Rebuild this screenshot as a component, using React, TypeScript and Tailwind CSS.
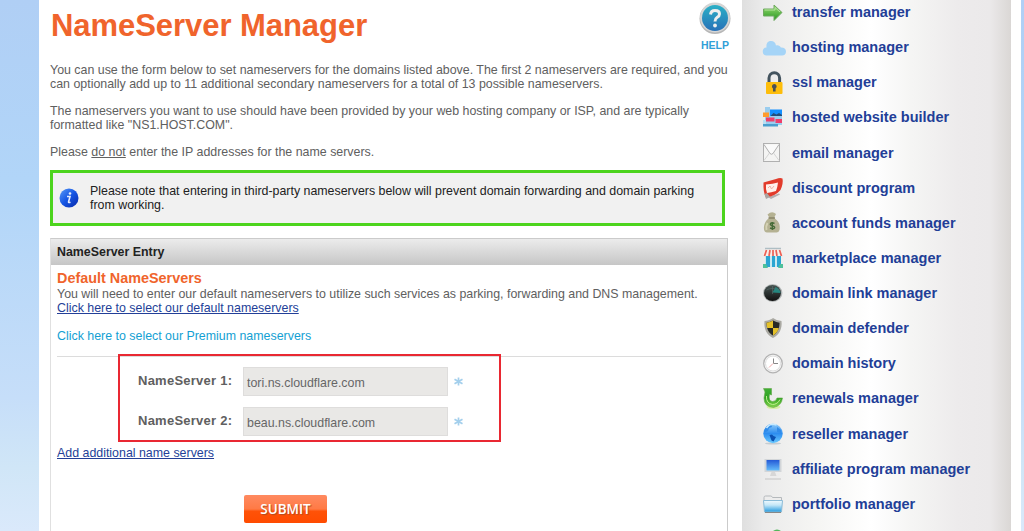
import type { ReactNode } from "react";

function Icon({ children }: { children: ReactNode }) {
  return (
    <svg width="24" height="24" viewBox="0 0 24 24" className="block shrink-0 overflow-visible">
      {children}
    </svg>
  );
}

const items: { label: string; icon: ReactNode }[] = [
  {
    label: "transfer manager",
    icon: (
      <>
        <path d="M.5 9h10.500V5l8 7.500-8 8v-4.500H.5z" fill="url(#green)" stroke="#6fa860" />
        <path d="M1.500 10h10.500V7.500l5 4.500" fill="none" stroke="#b5e59c" />
      </>
    ),
  },
  {
    label: "hosting manager",
    icon: <path d="M4 20.500a4 4 0 0 1-.5-8C3 8.500 4.500 6 8 6c3 0 4.500 1.500 5 4.500 2-.8 4 .2 4.800 2 3-.2 5.200 1.300 5.200 4 0 2.600-1.500 4-4 4z" fill="#a5d4f7" />,
  },
  {
    label: "ssl manager",
    icon: (
      <>
        <path d="M6 13V8a5.300 5.300 0 0 1 10.600 0V13" fill="none" stroke="#44545f" strokeWidth="3" />
        <rect x="3" y="12" width="16.500" height="12" rx="1" fill="#fdbd0b" />
        <path d="M11.300 14a2.400 2.400 0 0 1 1.300 4.400V21.500H10V18.400A2.400 2.400 0 0 1 11.300 14" fill="#4a5055" />
      </>
    ),
  },
  {
    label: "hosted website builder",
    icon: (
      <>
        <path d="M2 2h5v3h12v15H2z" fill="#9bcdee" />
        <path d="M0 19h15v2.500H0z" fill="#4a9fcf" />
        <path d="M0 15h3v4H0z" fill="#b9dff3" />
        <path d="M7 4.500h12v6.500H7z" fill="#138fff" />
        <path d="m7.500 11 3-3 3 1.500 2.500-1.500 3 2v1z" fill="#244c77" />
        <path d="M0 7.500h6v4.500H0z" fill="#ff9b2d" />
        <path d="M3 12.500h8.500v4H3zM12.500 14h6.500v4h-6.500z" fill="#ee3f6b" />
      </>
    ),
  },
  {
    label: "email manager",
    icon: (
      <>
        <rect x=".5" y="2.500" width="16" height="18" fill="#f4f4f3" stroke="#b0b0b0" />
        <path d="m1 3.500 6 9q1.500 1.500 3 0l6-9" fill="#fafafa" stroke="#b0b0b0" />
        <path d="m1 19.500 5.500-7.500M16 19.500 10.500 12" fill="none" stroke="#d5d5d5" />
      </>
    ),
  },
  {
    label: "discount program",
    icon: (
      <>
        <path d="M5 21 16 17.500l1 1L8 23z" fill="#b5aeb0" />
        <path d="M.5 6.500 13 3q4-1.500 6.500-.5 1 5-2 11.500-5 6-14.500 7.500-3-5-2.500-15" fill="#e23b2b" />
        <path d="M3 8.500q7-.5 12-2-.5 5-2 8.500-5 1.500-9 2-1.500-3-1-8.500" fill="#fff0eb" />
        <path d="m1.500 18 2.500-1 3 4-4 2z" fill="#a9a4a2" />
        <path d="m5 12 2-2 1.500 3 2.500-3" fill="none" stroke="#eeb3a8" />
      </>
    ),
  },
  {
    label: "account funds manager",
    icon: (
      <>
        <path d="M4.500 3.500Q9-.5 13 3l-2 4c5 3 6.500 7 5.500 12q-.8 2.500-3 2.500H4q-2.500 0-3-3C.5 13 3 9 6.500 7z" fill="#b5b293" />
        <path d="M5.500 7H12" stroke="#8a8467" strokeWidth="1.500" />
        <path d="M4.500 12q-2 3.500-1 7" fill="none" stroke="#d5d2b4" strokeWidth="2" />
        <path d="M11.500 12.500c-4-2-6 1.500-2 2.500s2 4-2.500 2M9.300 11v8" fill="none" stroke="#456b37" strokeWidth="1.400" />
      </>
    ),
  },
  {
    label: "marketplace manager",
    icon: (
      <>
        <path d="M2 8h16v13H2z" fill="#c9e9f1" />
        <path d="M3 9h4v12H3zM9 9h3v12H9zM14 9h4v12h-4z" fill="#2aa5d2" />
        <path d="M3 2h14l3 6-1 2H1L0 8z" fill="#f8eeea" />
        <path d="M3.500 4 1.500 10M7 4 6 10M10 4v6M13 4l1 6M16.500 4l2 6" stroke="#ec6055" strokeWidth="1.700" />
        <path d="M2 2.500h16" stroke="#aebec4" strokeWidth="1.500" />
        <path d="M0 22v-4h3l2 4zM20 22v-4h-3l-2 4z" fill="#4fc09a" />
      </>
    ),
  },
  {
    label: "domain link manager",
    icon: (
      <>
        <ellipse cx="9.700" cy="12" rx="9.700" ry="9" fill="#b4b8b8" />
        <ellipse cx="9.500" cy="12" rx="8.500" ry="8" fill="url(#dark)" />
        <path d="m9.500 11.500 3-5.500q4.500 1.500 5 6z" fill="#25867f" />
        <path d="M3.500 9q5-3 13 0M9.500 5v8" fill="none" stroke="#57706e" strokeWidth=".6" />
      </>
    ),
  },
  {
    label: "domain defender",
    icon: (
      <>
        <path d="M10 2q4 3 8.500 3c1 8-2.500 14-8.500 17C4 19 .5 13 1.500 5 6 5 10 2 10 2" fill="#aaa9a2" />
        <path d="M10 4.500q3.500 2 6.500 2.300c0 6-2 10-6.500 12.700C5.500 17 3.500 13 3.500 6.800Q6.500 6.500 10 4.500" fill="#282a24" />
        <path d="M10 4.500V12H4.200Q3.500 9.500 3.500 6.800 7 6.500 10 4.500M10 12h5.800q-1.300 5-5.800 7.500z" fill="#e5c129" />
      </>
    ),
  },
  {
    label: "domain history",
    icon: (
      <>
        <circle cx="10" cy="12.500" r="9.300" fill="#fafafa" stroke="#b3b3b3" strokeWidth="1.300" />
        <circle cx="10" cy="12.500" r="7.500" fill="#fff" stroke="#ddd" />
        <path d="M10.500 7.500v5H15" fill="none" stroke="#888" />
        <path d="m10 12.500-4 4" stroke="#f2a8a8" />
      </>
    ),
  },
  {
    label: "renewals manager",
    icon: (
      <>
        <ellipse cx="10.500" cy="21" rx="7" ry="2" fill="#d9efaa" />
        <path d="M.5 2.500h8V9L6.500 8.200Q5 15 9.500 15.500q3.500 0 4.500-3.500h5.500Q18.500 20 10.500 21.500 1 21 1 12l1-6z" fill="url(#renew)" stroke="#62a648" strokeWidth=".6" />
        <path d="M3.500 10q-.5 7.500 6 8.500 5 0 7.500-5" fill="none" stroke="#c0f190" />
      </>
    ),
  },
  {
    label: "reseller manager",
    icon: (
      <>
        <ellipse cx="10" cy="21.500" rx="8" ry="1" fill="#c6ccd1" />
        <circle cx="10" cy="11.500" r="9.700" fill="url(#globe)" />
        <path d="M1 9q2-6 7-7l1 3-3 1-1 3-4 2zM14 5l4 3v3l-4-1z" fill="#308be9" />
        <path d="m6.500 13 2.500-.5 1.500 1.500 2.500 1-2.500 4.500-2-1z" fill="#0b51b2" />
        <path d="M3.500 6q4-5.500 10-3" fill="none" stroke="#c7eaff" strokeWidth="1.500" />
      </>
    ),
  },
  {
    label: "affiliate program manager",
    icon: (
      <>
        <rect x="1.500" y="2" width="17" height="13" fill="#d2d5d8" />
        <rect x="3.500" y="3" width="13" height="10.500" fill="url(#screen)" />
        <ellipse cx="10" cy="19" rx="5.500" ry="3" fill="#ededed" />
        <path d="M8.500 15h3.500l1.500 4H7z" fill="#d7d7d7" />
        <path d="M2 22h16" stroke="#c4c4c4" />
      </>
    ),
  },
  {
    label: "portfolio manager",
    icon: (
      <>
        <path d="M1 8V5.500Q1 4 2.500 4h5Q9 4 9.500 5.500H18.500V10H1z" fill="#ededed" stroke="#b5b9bc" />
        <path d="M.5 8.500h19L18.500 20h-17z" fill="url(#folder)" stroke="#8abbd7" />
        <path d="M2 20.500h16" stroke="#888" />
      </>
    ),
  },
];

function Gradients() {
  return (
    <svg width="0" height="0" className="absolute">
      <defs>
        <linearGradient id="green" x2="0" y2="1">
          <stop stopColor="#9bdd75" />
          <stop offset="1" stopColor="#25961e" />
        </linearGradient>
        <linearGradient id="renew" x2="0" y2="1">
          <stop stopColor="#3faf35" />
          <stop offset=".5" stopColor="#2ea321" />
          <stop offset="1" stopColor="#86d54c" />
        </linearGradient>
        <linearGradient id="dark" x2="0" y2="1">
          <stop stopColor="#475452" />
          <stop offset="1" stopColor="#111" />
        </linearGradient>
        <linearGradient id="globe" x2="0" y2="1">
          <stop stopColor="#8fcbf8" />
          <stop offset=".5" stopColor="#2d8df0" />
          <stop offset="1" stopColor="#6bcaff" />
        </linearGradient>
        <linearGradient id="screen" x2="0" y2="1">
          <stop stopColor="#2459d6" />
          <stop offset="1" stopColor="#65bdfb" />
        </linearGradient>
        <linearGradient id="folder" x2="0" y2="1">
          <stop stopColor="#eef9fe" />
          <stop offset=".4" stopColor="#c4e7f8" />
          <stop offset="1" stopColor="#2299de" />
        </linearGradient>
        <linearGradient id="help" x2="0" y2="1">
          <stop stopColor="#2bb0c6" />
          <stop offset="1" stopColor="#2871b8" />
        </linearGradient>
        <linearGradient id="info" x2="1" y2="1">
          <stop stopColor="#5a9cf7" />
          <stop offset=".5" stopColor="#1454e3" />
          <stop offset="1" stopColor="#0828a8" />
        </linearGradient>
      </defs>
    </svg>
  );
}

function NameField({ n, value }: { n: number; value: string }) {
  return (
    <div className="flex h-[29px]">
      <label className="w-[94px] pt-[6px] text-[13px] leading-[16px] font-bold tracking-[0.25px] whitespace-nowrap text-[#606060]">
        NameServer {n}:
      </label>
      <input
        readOnly
        value={value}
        className="ml-[11px] h-[29px] w-[205px] border border-[#dedddc] bg-[#e9e8e6] px-[3px] pt-[2px] text-[12.4px] text-[#666]"
      />
      <svg width="9" height="9" viewBox="0 0 9 9" className="mt-[10px] ml-[6px]">
        <path d="M4.500 .5v8M.5 2.200l8 4.600M8.500 2.200l-8 4.600" stroke="#a3cfec" strokeWidth="1.700" />
      </svg>
    </div>
  );
}

export default function App() {
  return (
    <div
      className="flex h-[531px] w-[1024px] overflow-hidden bg-[linear-gradient(to_bottom,#b0cff5_0%,#b1d5f8_34%,#c6def9_75%,#d0e6f7_88%,#dae9fb_100%)] text-[12.4px] leading-[14px] text-[#606060]"
      style={{ fontFamily: '"Liberation Sans", Arial, sans-serif' }}
    >
      <Gradients />
      <div className="ml-[39px] flex w-[982px] shrink-0 bg-white">
        <main className="flex w-[703px] shrink-0 flex-col pl-[11px]">
          <header className="flex h-[63px] shrink-0 justify-between pr-[11px]">
            <h1 className="pt-[7px] pl-px text-[31px] leading-[38px] font-bold tracking-[-0.05px] whitespace-nowrap text-[#f0642c]">
              NameServer Manager
            </h1>
            <div className="flex w-8 flex-col items-center pt-[2px]">
              <svg width="32" height="32" viewBox="0 0 32 32">
                <circle cx="16" cy="16.500" r="15.500" fill="#b7b7b7" />
                <circle cx="16" cy="15.500" r="15" fill="#d5d5d5" />
                <circle cx="16" cy="16" r="13" fill="url(#help)" />
                <path d="M11.500 12.500q.5-4 4.500-4 4.500 0 4.500 3.500 0 2-2.500 3.500-2 1.200-2 4" fill="none" stroke="#eee" strokeWidth="3" />
                <circle cx="16" cy="23.500" r="1.900" fill="#eee" />
              </svg>
              <span className="mt-[4px] text-[10.5px] font-bold text-[#32a0d8]">HELP</span>
            </div>
          </header>

          <div className="flex flex-col gap-[13px] whitespace-nowrap">
            <p>
              You can use the form below to set nameservers for the domains listed above. The first 2 nameservers are required, and you
              <br />
              can optionally add up to 11 additional secondary nameservers for a total of 13 possible nameservers.
            </p>
            <p>
              The nameservers you want to use should have been provided by your web hosting company or ISP, and are typically
              <br />
              formatted like "NS1.HOST.COM".
            </p>
            <p>
              Please <span className="underline">do not</span> enter the IP addresses for the name servers.
            </p>
          </div>

          <div className="mt-[11px] flex h-[56px] w-[675px] shrink-0 border-[3px] border-[#4cd41d] bg-[#f1f1f1] pt-[11px] pl-[6px] whitespace-nowrap text-[#222]">
            <svg width="20" height="20" viewBox="0 0 20 20" className="mt-[4px] mr-[11px]">
              <circle cx="10" cy="10" r="9.500" fill="url(#info)" />
              <path d="M8 8.500h3L9.500 14q0 1 2 .2" fill="none" stroke="#e5edff" strokeWidth="1.600" />
              <circle cx="11" cy="5.500" r="1.300" fill="#e5edff" />
            </svg>
            <p>
              Please note that entering in third-party nameservers below will prevent domain forwarding and domain parking
              <br />
              from working.
            </p>
          </div>

          <section className="mt-[12px] h-[320px] w-[678px] shrink-0 border border-[#cbcbcb] border-l-[#e0e0e0] whitespace-nowrap">
            <h2 className="h-[26px] bg-gradient-to-b from-[#ececec] to-[#c6c6c6] pl-[6px] text-[12.4px] leading-[27px] font-bold text-[#222]">
              NameServer Entry
            </h2>
            <div className="px-[6px] pt-[5px]">
              <h3 className="text-[14.4px] leading-[17px] font-bold text-[#f0642c]">Default NameServers</h3>
              <p>You will need to enter our default nameservers to utilize such services as parking, forwarding and DNS management.</p>
              <a className="block text-[#233f98] underline">Click here to select our default nameservers</a>
              <a className="mt-[14px] block text-[#139fd3]">Click here to select our Premium nameservers</a>
            </div>
            <div className="relative mx-[6px] mt-[13px] border-t border-[#dcdcdc] pt-[10px]">
              <div className="flex flex-col gap-[11px] pl-[81px]">
                <NameField n={1} value="tori.ns.cloudflare.com" />
                <NameField n={2} value="beau.ns.cloudflare.com" />
              </div>
              <div className="absolute top-[-3px] left-[61px] h-[88px] w-[383px] border-2 border-[#e92832]" />
              <a className="mt-[10px] block text-[#233f98] underline">Add additional name servers</a>
              <button className="mt-[35px] ml-[187px] block h-[28px] w-[83px] rounded-[2px] bg-[linear-gradient(to_bottom,#ff8a60_0%,#ff7a45_50%,#ff5208_58%,#ff4b00_100%)] text-[13.5px] font-semibold text-white [font-family:'Open_Sans',sans-serif] [text-shadow:1px_1px_1px_#b34a20]">
                SUBMIT
              </button>
            </div>
          </section>
        </main>

        <aside className="flex w-[269px] shrink-0 flex-col bg-[linear-gradient(to_right,#dfdfdf_0%,#ebebeb_8%,#f5f5f3_27%,#ffffff_48%,#f5f5f4_63%,#edebec_80%,#ebe9ea_92%,#dad7d5_100%)] pl-[21px]">
          {items.map((item) => (
            <a key={item.label} className="flex h-[35.13px] shrink-0 items-start text-[14.5px] leading-[24px] font-bold text-[#223e97]">
              <Icon>{item.icon}</Icon>
              <span className="ml-[5px] whitespace-nowrap">{item.label}</span>
            </a>
          ))}
          <svg width="24" height="24" viewBox="0 0 24 24" className="shrink-0">
            <circle cx="14" cy="8.500" r="6" fill="#53b65c" />
          </svg>
        </aside>
      </div>
    </div>
  );
}
